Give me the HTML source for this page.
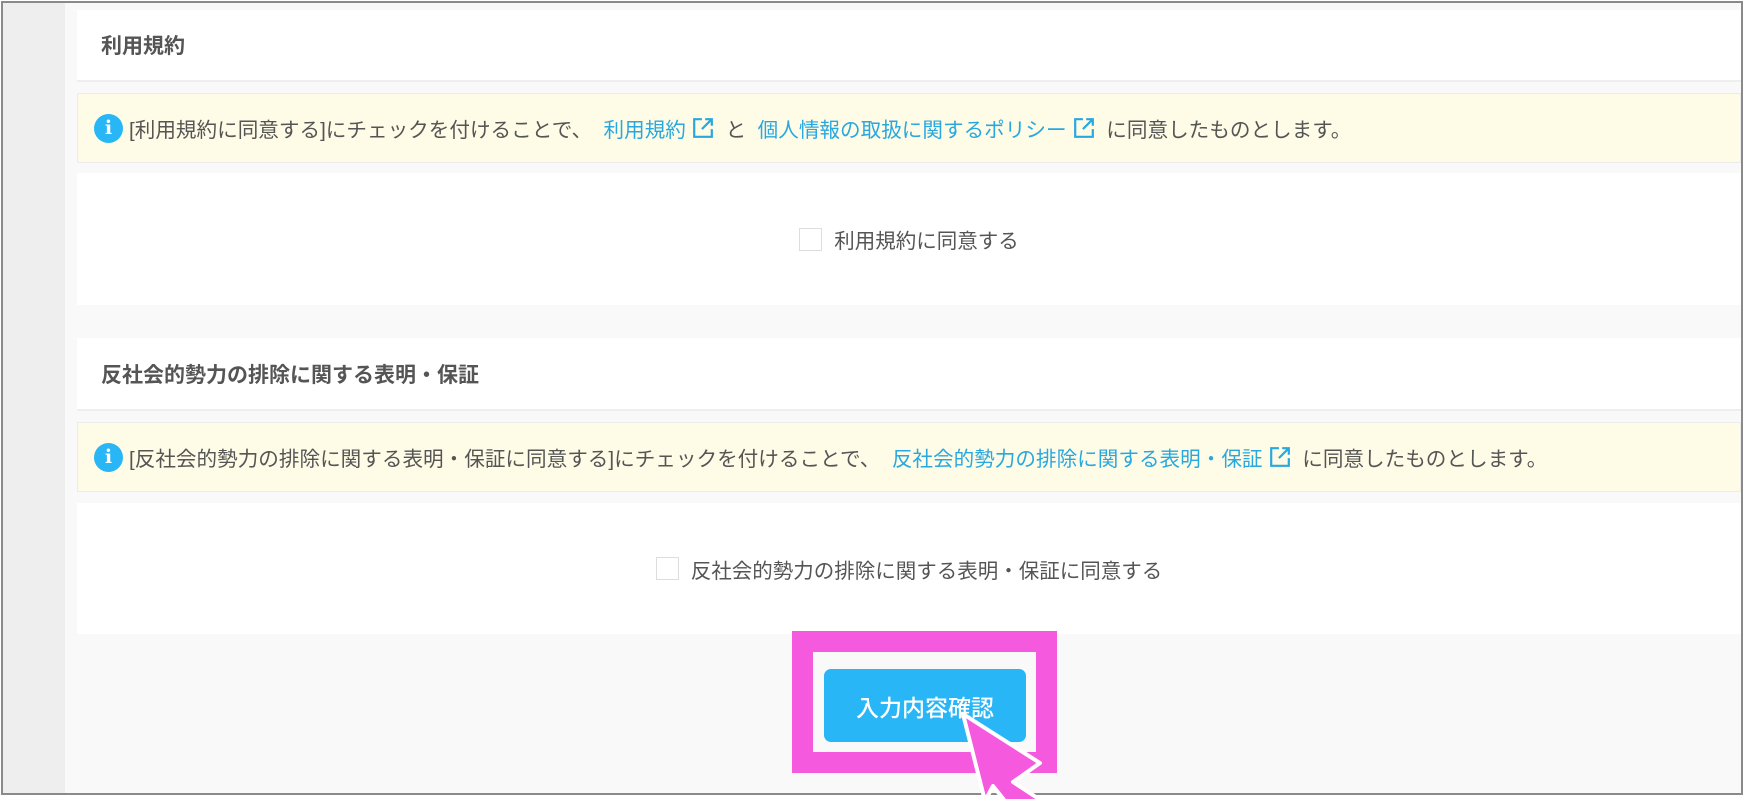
<!DOCTYPE html>
<html><head><meta charset="utf-8"><style>
*{margin:0;padding:0;box-sizing:border-box}
body{width:1745px;height:801px;background:#fff;position:relative;overflow:hidden;font-family:"Liberation Sans","Noto Sans CJK JP",sans-serif;color:#555}
.frame{position:absolute;left:1px;top:1px;width:1742px;height:794px;border:2px solid #8a8a8a;background:#f9f9f9;overflow:hidden}
.side{position:absolute;left:0;top:0;width:62px;height:100%;background:#eeeeee}
.blk{position:absolute;left:74px;right:0;background:#fff}
.title{font-size:21px;font-weight:bold;padding-left:24px;display:flex;align-items:center}
.note{position:absolute;left:74px;right:0;background:#fefce6;border:1px solid #ececec;display:flex;align-items:center;font-size:20.6px;white-space:nowrap}
.ic{width:29px;height:29px;border-radius:50%;background:#29b6f6;color:#fff;font-weight:bold;font-size:19px;display:flex;align-items:center;justify-content:center;margin:0 6px 0 16px;font-family:"DejaVu Serif",serif}
.lk{color:#29a8e0}
.ext{display:inline-block;vertical-align:-3px;margin:0 6px 0 6px}
.cb{display:flex;align-items:center;justify-content:center;font-size:20.5px}
.box{width:23px;height:23px;border:1px solid #ddd;margin-right:12px;background:#fff}
</style></head><body>
<div class="frame">
<div class="side"></div>
<div class="blk title" style="top:7px;height:70px">利用規約</div>
<div style="position:absolute;left:74px;right:0;top:77px;height:2px;background:#eee"></div>
<div class="note" style="top:90px;height:70px"><span class="ic">i</span>[利用規約に同意する]にチェックを付けることで、&nbsp;&nbsp;<span class="lk">利用規約</span><svg class="ext" width="22" height="22" viewBox="0 0 20 20" fill="none" stroke="#29a8e0" stroke-width="2"><path d="M9 2H2v16h16v-7M12 2h6v6M18 2L9 11"/></svg>&nbsp;と&nbsp;&nbsp;<span class="lk">個人情報の取扱に関するポリシー</span><svg class="ext" width="22" height="22" viewBox="0 0 20 20" fill="none" stroke="#29a8e0" stroke-width="2"><path d="M9 2H2v16h16v-7M12 2h6v6M18 2L9 11"/></svg>&nbsp;に同意したものとします。</div>
<div class="blk cb" style="top:170px;height:132px"><span class="box"></span>利用規約に同意する</div>
<div class="blk title" style="top:335px;height:71px">反社会的勢力の排除に関する表明・保証</div>
<div style="position:absolute;left:74px;right:0;top:406px;height:2px;background:#eee"></div>
<div class="note" style="top:419px;height:70px"><span class="ic">i</span>[反社会的勢力の排除に関する表明・保証に同意する]にチェックを付けることで、&nbsp;&nbsp;<span class="lk">反社会的勢力の排除に関する表明・保証</span><svg class="ext" width="22" height="22" viewBox="0 0 20 20" fill="none" stroke="#29a8e0" stroke-width="2"><path d="M9 2H2v16h16v-7M12 2h6v6M18 2L9 11"/></svg>&nbsp;に同意したものとします。</div>
<div class="blk cb" style="top:500px;height:131px"><span class="box"></span>反社会的勢力の排除に関する表明・保証に同意する</div>
<div style="position:absolute;left:789px;top:628px;width:265px;height:142px;border:21px solid #f55ade;background:#f9f9f9"></div>
<div style="position:absolute;left:821px;top:666px;width:202px;height:73px;background:#29b6f6;border-radius:7px;color:#fff;font-size:23px;display:flex;align-items:center;justify-content:center;font-weight:500">入力内容確認</div>
</div>
<svg style="position:absolute;left:0;top:0" width="1745" height="801"><path d="M963 714 L1040 763 L1013 782 L1042 801 L1005 801 L993 786 L985 801 Z" fill="#f55ade" stroke="#fff" stroke-width="4" stroke-linejoin="round"/></svg>
</body></html>
